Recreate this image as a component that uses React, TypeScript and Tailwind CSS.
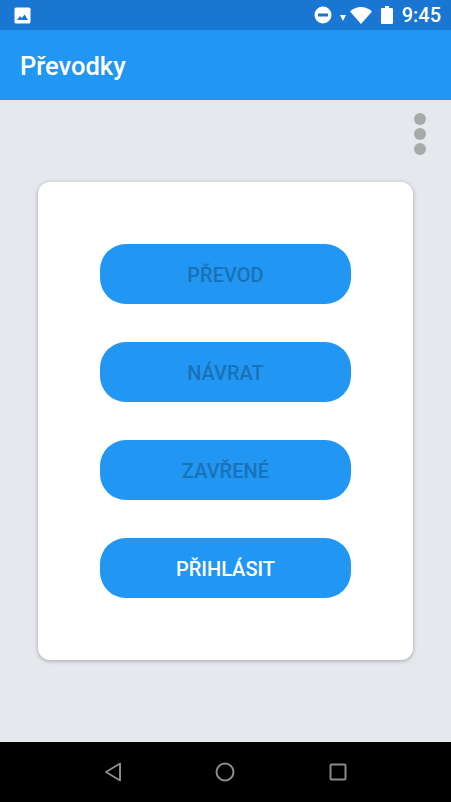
export default function App() {
  const font = "font-['Roboto',sans-serif]";
  return (
    <div className={`flex h-[802px] w-[451px] flex-col overflow-hidden bg-[#e5e8ed] ${font}`}>
      <div className="flex h-[30px] shrink-0 items-center bg-[#1976d2] pl-[14px] pr-[10px] text-white">
        <svg width="17" height="17" viewBox="0 0 17 17" aria-hidden="true">
          <rect x="0.5" y="0.5" width="16" height="16" rx="1.6" fill="#fff" />
          <path d="M3 13 L6 9 L7.8 11 L10.6 7.5 L14 13 Z" fill="#1976d2" />
        </svg>
        <div className="ml-auto flex items-center">
          <svg width="18" height="18" viewBox="0 0 18 18" aria-hidden="true">
            <circle cx="9" cy="9" r="8.5" fill="#fff" />
            <rect x="4" y="7.5" width="10" height="3" fill="#1976d2" />
          </svg>
          <svg className="ml-[8px] mt-[6px]" width="6" height="6" viewBox="0 0 6 6" aria-hidden="true">
            <path d="M0 0 H6 L3 6 Z" fill="#fff" />
          </svg>
          <svg className="ml-[4px]" width="22" height="17" viewBox="0 0 22 17" aria-hidden="true">
            <path d="M0 4.5 C6 -1.5 16 -1.5 22 4.5 L11 17 Z" fill="#fff" />
          </svg>
          <svg className="ml-[9px]" width="12" height="18" viewBox="0 0 12 18" aria-hidden="true">
            <path d="M4 0 H8 V2 H11 Q12 2 12 3 V17 Q12 18 11 18 H1 Q0 18 0 17 V3 Q0 2 1 2 H4 Z" fill="#fff" />
          </svg>
          <span className="ml-[9px] text-[20px] font-medium leading-none">9:45</span>
        </div>
      </div>
      <div className="flex h-[70px] shrink-0 items-center bg-[#2196f3] pl-5 pt-[3px] text-[25.5px] font-medium text-white">
        Převodky
      </div>
      <div className="flex min-h-0 flex-1 flex-col">
        <div className="flex flex-col items-end gap-[3px] pr-[25.5px] pt-[13px]">
          <span className="size-3 rounded-full bg-[#a9a9a9]" />
          <span className="size-3 rounded-full bg-[#a9a9a9]" />
          <span className="size-3 rounded-full bg-[#a9a9a9]" />
        </div>
        <div className="ml-[38px] mt-[27px] flex w-[375px] flex-col items-center gap-[38px] rounded-[12px] bg-white py-[62px] shadow-[0_1px_4px_rgba(0,0,0,0.3)]">
          {["PŘEVOD", "NÁVRAT", "ZAVŘENÉ"].map((t) => (
            <button
              key={t}
              className="flex h-[60px] w-[251px] items-center justify-center rounded-[26px] bg-[#2196f3] pt-[2px] text-[20px] font-medium text-[#1a72b6]"
            >
              {t}
            </button>
          ))}
          <button className="flex h-[60px] w-[251px] items-center justify-center rounded-[26px] bg-[#2196f3] pt-[2px] text-[20px] font-medium text-white">
            PŘIHLÁSIT
          </button>
        </div>
      </div>
      <div className="flex h-[60px] shrink-0 items-center bg-black pl-[104px]">
        <svg width="18" height="20" viewBox="0 0 18 20" fill="none" aria-hidden="true">
          <path d="M16 1.5 V18.5 L2 10 Z" stroke="#8a8a8a" strokeWidth="2" strokeLinejoin="round" />
        </svg>
        <svg className="ml-[93px]" width="20" height="20" viewBox="0 0 20 20" fill="none" aria-hidden="true">
          <circle cx="10" cy="10" r="8.5" stroke="#8a8a8a" strokeWidth="2" />
        </svg>
        <svg className="ml-[94px]" width="18" height="18" viewBox="0 0 18 18" fill="none" aria-hidden="true">
          <rect x="1.5" y="1.5" width="15" height="15" rx="1" stroke="#8a8a8a" strokeWidth="2" />
        </svg>
      </div>
    </div>
  );
}
